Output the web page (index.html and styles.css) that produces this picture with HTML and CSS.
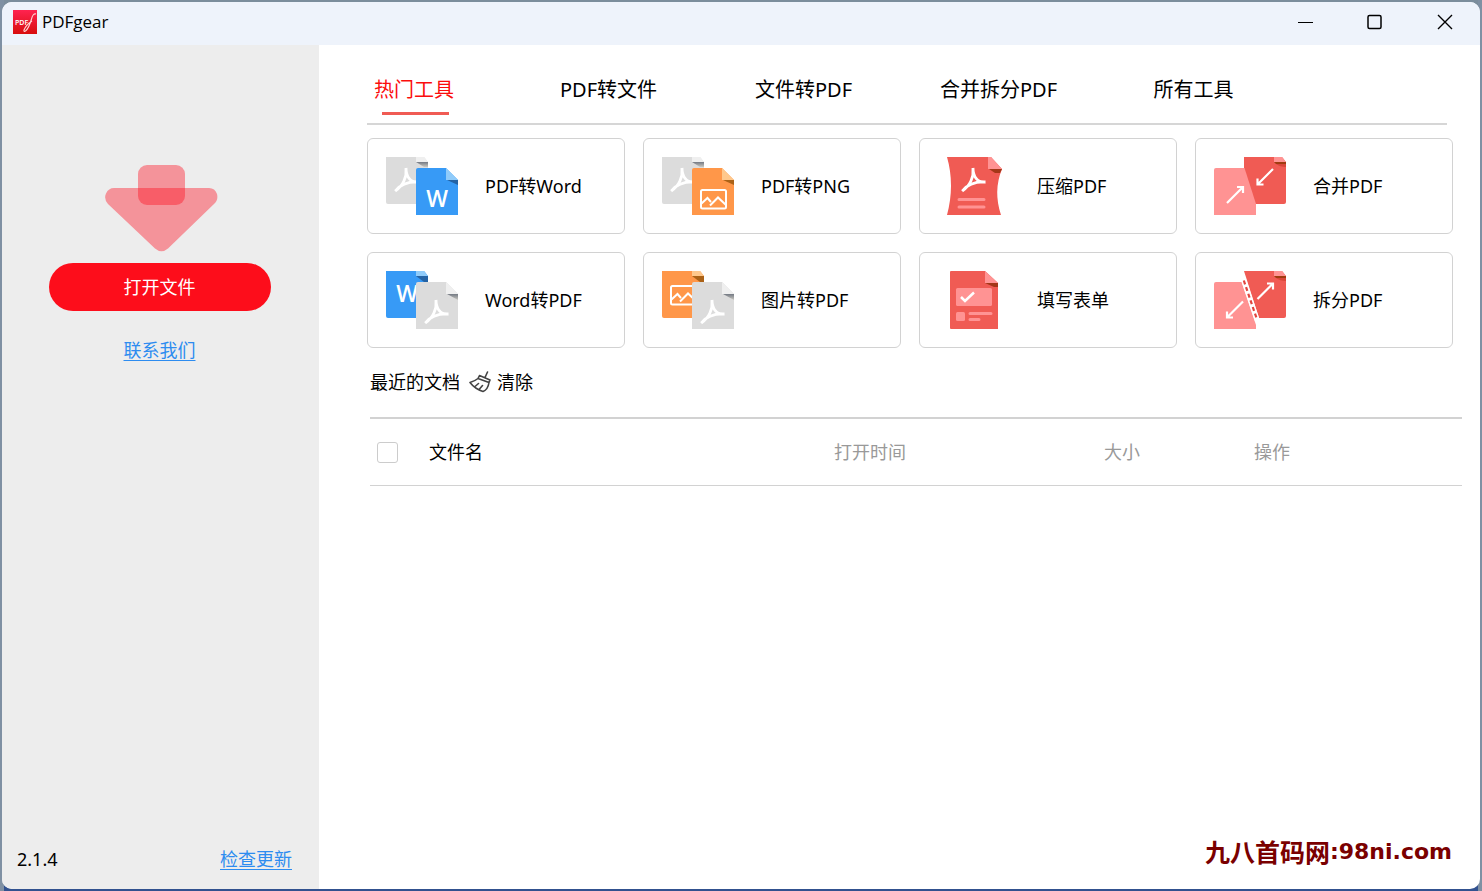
FILE: index.html
```html
<!DOCTYPE html>
<html lang="zh-CN">
<head>
<meta charset="utf-8">
<title>PDFgear</title>
<meta name="viewport" content="width=device-width, initial-scale=1">
<link rel="stylesheet" href="styles.css">
</head>
<body>
<svg class="defs" aria-hidden="true">
  <defs>
    <linearGradient id="logo-fill" x1="0" y1="0" x2="0" y2="1"><stop offset="0" stop-color="#ff2350"/><stop offset="1" stop-color="#d80d0d"/></linearGradient>
    <linearGradient id="grey-shade" x1="0" y1="0" x2="0" y2="1"><stop offset="0" stop-color="#747a84"/><stop offset="1" stop-color="#c9c7c0"/></linearGradient>
    <g id="acrobat" fill="none" stroke="#fff" stroke-width="2.8">
      <path d="M0-12C1-3-3 6-10.8 11M0-12C0-4 4 3 12.5 2M-10.8 11C-6 5 2 1.5 12.5 2"/>
    </g>
    <g id="picture" fill="none" stroke="#fff" stroke-width="2">
      <rect x="9" y="4" width="25" height="18.500" rx="1.500"/>
      <path d="M9.500 17.500L15.500 12L19 16M18 19.500L26 11.500L34 19"/>
    </g>
    <g id="front-grey">
      <path d="M32 11H60L72 23V58H30V13Q30 11 32 11Z" fill="#dcdcdc"/>
      <path d="M60 11L72 23H60Z" fill="#efefef"/><path d="M61 23H72V29Z" fill="url(#grey-shade)"/>
      <use href="#acrobat" x="50" y="41"/>
    </g>
    <g id="back-grey">
      <path d="M0 0H38L42 5V47H2Q0 47 0 45Z" fill="#dcdcdc"/>
      <path d="M30 0H38L42 5H30Z" fill="#efefef"/><path d="M30 5H42V10H38Z" fill="url(#grey-shade)"/>
      <use href="#acrobat" x="20" y="23"/>
    </g>
  </defs>
</svg>
<div class="window">
  <header class="titlebar">
    <svg class="logo" viewBox="0 0 24 24" aria-hidden="true">
      <rect width="24" height="24" fill="url(#logo-fill)"/>
      <text x="2" y="14.500" class="logo-text">PDF</text>
      <path d="M23 4Q20 3 18.500 9Q16 18 12.500 21Q10.500 22 11 20Q13 15 19 11" fill="none" stroke="#ffd5d5" stroke-width="1.100"/>
    </svg>
    <h1 class="title">PDFgear</h1>
    <div class="controls">
      <button class="control" aria-label="最小化"><svg viewBox="0 0 16 16"><path d="M1 8.500H16"/></svg></button>
      <button class="control" aria-label="最大化"><svg viewBox="0 0 16 16"><rect x="1" y="1.500" width="13" height="13" rx="1.500" stroke-width="1.500"/></svg></button>
      <button class="control" aria-label="关闭"><svg viewBox="0 0 16 16"><path d="M1 1L15 15M15 1L1 15" stroke-width="1.400"/></svg></button>
    </div>
  </header>
  <div class="body">
    <aside class="sidebar">
      <svg class="drop" viewBox="0 0 114 88" aria-hidden="true">
        <g fill="#ff0d1f" fill-opacity=".4">
          <rect x="34" y="1" width="47" height="40" rx="9"/>
          <path d="M10 24H105Q111 24 113 30Q114.500 36 110 40L64 84.500Q57.500 90 51 84.500L4 40Q-.5 35 2 29.500Q4.500 24 10 24Z"/>
        </g>
      </svg>
      <button class="open">打开文件</button>
      <a class="link" href="#contact">联系我们</a>
      <footer class="version"><span>2.1.4</span><a class="link" href="#update">检查更新</a></footer>
    </aside>
    <main class="main">
      <nav class="tabs">
        <button class="tab active">热门工具</button>
        <button class="tab">PDF转文件</button>
        <button class="tab">文件转PDF</button>
        <button class="tab">合并拆分PDF</button>
        <button class="tab">所有工具</button>
      </nav>
      <section class="tools">
        <button class="tool">
          <svg viewBox="0 0 72 58" aria-hidden="true">
            <use href="#back-grey"/>
            <path d="M32 11H60L72 23V58H30V13Q30 11 32 11Z" fill="#379af6"/>
            <path d="M60 11L72 23H60Z" fill="#8fcbfa"/><path d="M61 23H72V28Z" fill="#2463a5"/>
            <text x="51" y="50" class="letter">W</text>
          </svg><span>PDF转Word</span></button>
        <button class="tool">
          <svg viewBox="0 0 72 58" aria-hidden="true">
            <use href="#back-grey"/>
            <path d="M32 11H60L72 23V58H30V13Q30 11 32 11Z" fill="#ff9749"/>
            <path d="M60 11L72 23H60Z" fill="#ffc88c"/><path d="M61 23H72V28Z" fill="#ab6217"/>
            <use href="#picture" x="30" y="29"/>
          </svg><span>PDF转PNG</span></button>
        <button class="tool">
          <svg viewBox="0 0 72 58" aria-hidden="true">
            <path d="M9 0H53L64 12Q55 34 63 58H9Q17 28 9 0Z" fill="#f05b54"/>
            <path d="M50 0H53L64 12H50Z" fill="#ff9393"/><path d="M51 12H64L62 16H57Z" fill="#a43718"/>
            <use href="#acrobat" x="35" y="23"/>
            <path d="M21 42.500H46M21 50H46" stroke="#ff9393" stroke-width="3" stroke-linecap="round"/>
          </svg><span>压缩PDF</span></button>
        <button class="tool">
          <svg viewBox="0 0 72 58" aria-hidden="true">
            <path d="M30 0H68L72 5V45Q72 47 70 47H30Z" fill="#f05b54"/>
            <path d="M60 0H68L72 5H60Z" fill="#ff9393"/><path d="M60 5H72V7H62Z" fill="#a03c10"/><path d="M62 7H72V10Q66 10 62 7Z" fill="#d84638"/>
            <path d="M2 11H30.500L42 47V58H0V13Q0 11 2 11Z" fill="#ff9393"/>
            <path d="M13 46L29 30M23 30H29V36M59 12L43.500 27.500M43.500 21.500V27.500H49.500" fill="none" stroke="#fff" stroke-width="2.200"/>
          </svg><span>合并PDF</span></button>
        <button class="tool">
          <svg viewBox="0 0 72 58" aria-hidden="true">
            <path d="M0 0H38L42 5V47H2Q0 47 0 45Z" fill="#379af6"/>
            <path d="M30 0H38L42 5H30Z" fill="#8fcbfa"/><path d="M30 5H42V11H38Z" fill="#2463a5"/>
            <text x="21" y="31" class="letter">W</text>
            <use href="#front-grey"/>
          </svg><span>Word转PDF</span></button>
        <button class="tool">
          <svg viewBox="0 0 72 58" aria-hidden="true">
            <path d="M0 0H38L42 5V47H2Q0 47 0 45Z" fill="#ff9749"/>
            <path d="M30 0H38L42 5H30Z" fill="#ffc88c"/><path d="M30 5H42V11H38Z" fill="#ab6217"/>
            <use href="#picture" y="11"/>
            <use href="#front-grey"/>
          </svg><span>图片转PDF</span></button>
        <button class="tool">
          <svg viewBox="0 0 72 58" aria-hidden="true">
            <path d="M13 0H47L60 12V58H13Q12 58 12 57V1Q12 0 13 0Z" fill="#f05b54"/>
            <path d="M47 0L60 12H47Z" fill="#ff9393"/><path d="M47 12H60V16H56Z" fill="#a43718"/>
            <rect x="18" y="17" width="36" height="18" rx="1.500" fill="#ff9393"/>
            <path d="M23 26L27 30L36 21.500" fill="none" stroke="#fff" stroke-width="2.500"/>
            <rect x="18" y="41" width="9" height="9" rx="1.500" fill="#ff9393"/>
            <path d="M32 42.500H53M32 48.500H41" stroke="#ff9393" stroke-width="3" stroke-linecap="round"/>
          </svg><span>填写表单</span></button>
        <button class="tool">
          <svg viewBox="0 0 72 58" aria-hidden="true">
            <path d="M30 0H68L72 5V45Q72 47 70 47H45Z" fill="#f05b54"/>
            <path d="M60 0H68L72 5H60Z" fill="#ff9393"/><path d="M60 5H72V7H62Z" fill="#a03c10"/><path d="M62 7H72V10Q66 10 62 7Z" fill="#d84638"/>
            <path d="M2 11H27.500L42 54V58H0V13Q0 11 2 11Z" fill="#ff9393"/>
            <path d="M29 7L43.500 50" stroke="#fff" stroke-width="5"/>
            <path d="M29.800 9.500L43 48.500" stroke="#e0453e" stroke-width="2.200" stroke-dasharray="4 3"/>
            <path d="M29 30.500L13 46.500M13 40.500V46.500H19M43.500 28L59 12.500M53 12.500H59V18.500" fill="none" stroke="#fff" stroke-width="2.200"/>
          </svg><span>拆分PDF</span></button>
      </section>
      <section class="recent">
        <div class="recent-head">
          <h2>最近的文档</h2>
          <button class="clear"><svg viewBox="0 0 22 22" aria-hidden="true"><path d="M18.500 1L16 6.500M10.500 4.500L21 9M10.500 4.500L9 7.500L20 11.500L21 9M9 7.500Q6 10 1 11.500Q6 18 14 20.500Q19 18.500 20 11.500M6 15.500L9.500 12.500M10.500 18L13.500 14.500"/></svg>清除</button>
        </div>
        <table class="files">
          <thead><tr>
            <th class="pick"><input type="checkbox" aria-label="全选"></th>
            <th class="name">文件名</th><th class="time">打开时间</th><th class="size">大小</th><th class="action">操作</th>
          </tr></thead>
        </table>
      </section>
      <p class="mark"><span class="mark-name">九八首码网</span><span class="mark-site">:98ni.com</span></p>
    </main>
  </div>
</div>
</body>
</html>
```
FILE: styles.css
```css
* { box-sizing: border-box; }
body {
  margin: 0;
  padding: 2px;
  min-height: 100vh;
  display: flex;
  background: linear-gradient(90deg, #7f90a3 0, #7f90a3 4px, transparent 4px, transparent calc(100% - 4px), #7f90a3 calc(100% - 4px)), linear-gradient(#7b8d9c 0, #7b8d9c 50%, #31518f 50%);
  color: #000;
  font: 18px/24px "Noto Sans", "Noto Sans CJK SC", sans-serif;
}
button { border: 0; padding: 0; background: none; color: inherit; font: inherit; cursor: pointer; }
h1, h2, p { margin: 0; font-weight: 400; }
.defs { position: absolute; width: 0; height: 0; }
.window { flex: 1; display: flex; flex-direction: column; overflow: hidden; border-radius: 10px; background: #fff; }

.titlebar { display: flex; align-items: center; height: 43px; padding: 0 0 3px 11px; background: #eef3fb; }
.logo { width: 24px; height: 24px; }
.logo-text { font: 600 7px "Open Sans", sans-serif; fill: #fff; }
.title { margin-left: 5px; font-family: "Open Sans", sans-serif; font-size: 17px; }
.controls { display: flex; margin-left: auto; }
.control { width: 70px; height: 40px; display: flex; align-items: center; justify-content: center; }
.control svg { width: 16px; height: 16px; fill: none; stroke: #000; }

.body { flex: 1; display: flex; }
.sidebar { width: 317px; padding: 119px 27px 18px 15px; display: flex; flex-direction: column; align-items: center; background: #ededed; }
.drop { width: 114px; height: 88px; margin-left: 12px; }
.open { width: 222px; height: 48px; margin: 11px 0 27px 10px; border-radius: 24px; background: #fd0d1b; color: #fff; }
.link { color: #2d8cf0; text-underline-offset: 3px; text-decoration-thickness: 1px; }
.sidebar > .link { margin-left: 10px; }
.version { align-self: stretch; margin-top: auto; display: flex; justify-content: space-between; }

.main { flex: 1; display: flex; flex-direction: column; padding: 25px 18px 22px 48px; }
.tabs { display: grid; grid-template-columns: 48fr repeat(4, 65fr) 52fr; margin-right: 15px; border-bottom: 2px solid #d6d6d6; }
.tab { height: 53px; padding-bottom: 13px; font-size: 20px; }
.active { position: relative; justify-self: start; padding-left: 7px; color: #fb0d0d; }
.active::after { content: ""; position: absolute; left: 15px; bottom: 8px; width: 67px; height: 3px; background: #f05b54; }
.tools { display: grid; grid-template-columns: repeat(4, 1fr); gap: 18px; margin: 13px 9px 0 0; }
.tool { display: flex; align-items: center; gap: 27px; height: 96px; padding-left: 18px; border: 1px solid #d2d2d2; border-radius: 6px; }
.tool svg { width: 72px; height: 58px; }
.letter { font: 600 23px "Open Sans", sans-serif; fill: #fff; text-anchor: middle; }

.recent { margin: 22px 0 0 3px; }
.recent-head { display: flex; gap: 9px; }
.recent-head h2 { font-size: 18px; }
.clear { display: flex; align-items: center; gap: 6px; }
.clear svg { width: 22px; height: 22px; fill: none; stroke: #444; stroke-width: 1.6; stroke-linejoin: round; stroke-linecap: round; }
.files { width: 100%; margin-top: 23px; table-layout: fixed; border-collapse: separate; border-spacing: 0; border-top: 2px solid #d2d2d2; border-bottom: 1px solid #d2d2d2; }
.files th { height: 66px; padding: 0; text-align: left; font-weight: 400; color: #999; }
.files .name { width: 405px; color: #000; }
.pick { width: 59px; }
.time { width: 270px; }
.size { width: 150px; }
.pick input { appearance: none; display: block; width: 21px; height: 21px; margin: 0 0 0 7px; border: 1px solid #ccc; border-radius: 3px; }
.mark { margin: auto 10px 0 0; align-self: flex-end; display: flex; align-items: center; color: #7a0000; font-size: 25px; line-height: 30px; font-weight: 700; }
.mark-site { font-family: "DejaVu Sans", sans-serif; font-size: 22px; }
```
